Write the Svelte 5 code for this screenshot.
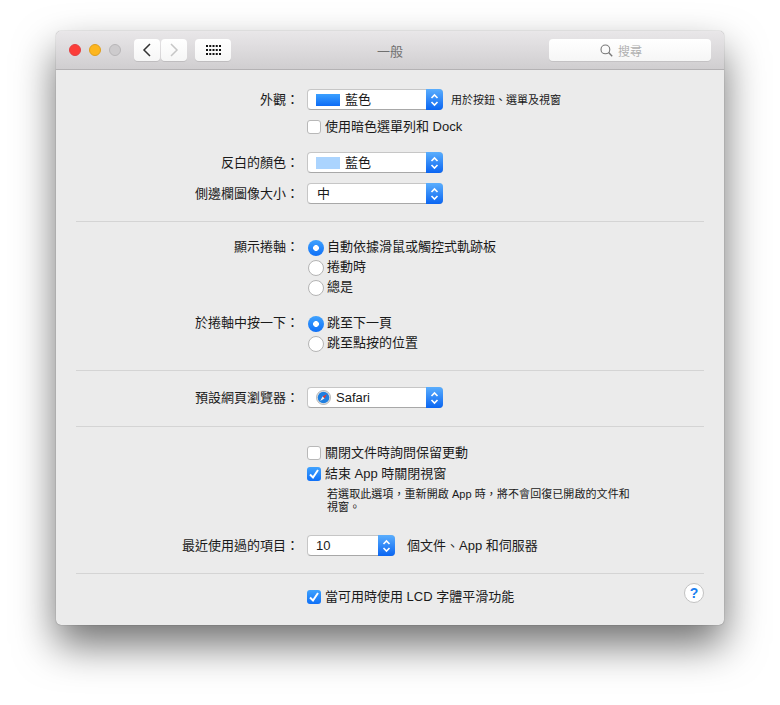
<script>
  // General preferences pane (OS X Yosemite, zh-Hant)
  const gridDots = []
  for (let r = 0; r < 3; r++) {
    for (let c = 0; c < 5; c++) gridDots.push({ x: c * 3.25, y: r * 4 })
  }
</script>

{#snippet arrows()}
  <span class="cap">
    <svg width="9" height="14" viewBox="0 0 9 14" fill="none" stroke="#fff" stroke-width="1.6">
      <path d="M1.5 5 L4.5 2 L7.5 5" />
      <path d="M1.5 9 L4.5 12 L7.5 9" />
    </svg>
  </span>
{/snippet}

{#snippet check(on)}
  <span class="box" class:on>
    {#if on}
      <svg width="14" height="14" viewBox="0 0 14 14" fill="none" stroke="#fff" stroke-width="2">
        <path d="M3 7.5 L6 10.5 L11 3" />
      </svg>
    {/if}
  </span>
{/snippet}

{#snippet radio(on, text)}
  <div class="row">
    <span></span>
    <div class="opt radio-opt">
      <span class="radio" class:on></span>
      <span class="txt">{text}</span>
    </div>
  </div>
{/snippet}

<div class="page">
  <div class="window">
    <header class="titlebar">
      <div class="lights">
        <span class="light red"></span>
        <span class="light yellow"></span>
        <span class="light off"></span>
      </div>
      <div class="nav">
        <button class="tbtn nav-btn">
          <svg width="10" height="14" viewBox="0 0 10 14" fill="none" stroke="#333" stroke-width="1.5">
            <path d="M8 1 L2 7 L8 13" />
          </svg>
        </button>
        <button class="tbtn nav-btn">
          <svg width="10" height="14" viewBox="0 0 10 14" fill="none" stroke="#c6c6c6" stroke-width="1.5">
            <path d="M2 1 L8 7 L2 13" />
          </svg>
        </button>
      </div>
      <button class="tbtn grid-btn">
        <svg width="15" height="10" viewBox="0 0 15 10" fill="#111">
          {#each gridDots as d}
            <rect x={d.x} y={d.y} width="2" height="2" />
          {/each}
        </svg>
      </button>
      <div class="title">一般</div>
      <div class="search">
        <svg width="13" height="13" viewBox="0 0 13 13" fill="none" stroke="#777" stroke-width="1.1">
          <circle cx="5.4" cy="5.4" r="4.4" />
          <path d="M8.6 8.6 L12.2 12.2" stroke-width="1.4" />
        </svg>
        <span>搜尋</span>
      </div>
    </header>

    <main class="content">
      <section class="s1">
        <div class="row">
          <span class="label">外觀：</span>
          <div class="opt">
            <div class="select">
              <span class="swatch blue"></span>
              <span class="txt">藍色</span>
              {@render arrows()}
            </div>
            <span class="hint txt">用於按鈕、選單及視窗</span>
          </div>
        </div>
        <div class="row check-dark">
          <span></span>
          <div class="opt chk">{@render check(false)}<span class="txt">使用暗色選單列和 Dock</span></div>
        </div>
        <div class="row after-chk">
          <span class="label">反白的顏色：</span>
          <div class="select">
            <span class="swatch light-blue"></span>
            <span class="txt">藍色</span>
            {@render arrows()}
          </div>
        </div>
        <div class="row next-select">
          <span class="label">側邊欄圖像大小：</span>
          <div class="select">
            <span class="txt plain">中</span>
            {@render arrows()}
          </div>
        </div>
      </section>

      <hr />

      <section class="s2">
        <div class="row">
          <span class="label">顯示捲軸：</span>
          <div class="opt radio-opt">
            <span class="radio on"></span>
            <span class="txt">自動依據滑鼠或觸控式軌跡板</span>
          </div>
        </div>
        {@render radio(false, '捲動時')}
        {@render radio(false, '總是')}
        <div class="row group">
          <span class="label">於捲軸中按一下：</span>
          <div class="opt radio-opt">
            <span class="radio on"></span>
            <span class="txt">跳至下一頁</span>
          </div>
        </div>
        {@render radio(false, '跳至點按的位置')}
      </section>

      <hr />

      <section class="s3">
        <div class="row">
          <span class="label">預設網頁瀏覽器：</span>
          <div class="select">
            <svg class="safari" width="15" height="15" viewBox="0 0 16 16">
              <circle cx="8" cy="8" r="7.5" fill="#e4e4e4" stroke="#8a8a8a" stroke-width="0.6" />
              <circle cx="8" cy="8" r="6.2" fill="#1f7fe0" />
              <path d="M11.6 4.4 L7 7 L9 9 Z" fill="#e8382c" />
              <path d="M4.4 11.6 L7 7 L9 9 Z" fill="#f2f2f2" />
            </svg>
            <span>Safari</span>
            {@render arrows()}
          </div>
        </div>
      </section>

      <hr />

      <section class="s4">
        <div class="row">
          <span></span>
          <div class="opt chk">{@render check(false)}<span class="txt">關閉文件時詢問保留更動</span></div>
        </div>
        <div class="row quit">
          <span></span>
          <div class="opt chk">{@render check(true)}<span class="txt">結束 App 時關閉視窗</span></div>
        </div>
        <div class="row note-row">
          <span></span>
          <p class="note">若選取此選項，重新開啟 App 時，將不會回復已開啟的文件和<br />視窗。</p>
        </div>
        <div class="row recent">
          <span class="label">最近使用過的項目：</span>
          <div class="opt">
            <div class="select small">
              <span>10</span>
              {@render arrows()}
            </div>
            <span class="items txt">個文件、App 和伺服器</span>
          </div>
        </div>
      </section>

      <hr />

      <section class="s5">
        <div class="row">
          <span></span>
          <div class="opt chk">{@render check(true)}<span class="txt">當可用時使用 LCD 字體平滑功能</span></div>
          <button class="help">?</button>
        </div>
      </section>
    </main>
  </div>
</div>

<style>
  :global(body) {
    background: #fff;
    font-family: "Liberation Sans", "Noto Sans CJK TC", sans-serif;
    font-size: 13px;
    color: #1a1a1a;
  }

  .page {
    padding: 31px 56px 80px;
    height: 705px;
    box-sizing: border-box;
    overflow: hidden;
  }

  .window {
    width: 668px;
    height: 594px;
    border-radius: 5px;
    background: #ebebeb;
    box-shadow:
      0 0 1px rgba(0, 0, 0, 0.55),
      0 20px 40px rgba(0, 0, 0, 0.56);
    overflow: hidden;
    display: flex;
    flex-direction: column;
  }

  .titlebar {
    height: 38px;
    flex: none;
    display: flex;
    align-items: center;
    position: relative;
    padding-left: 13px;
    background: linear-gradient(#e9e7e9, #d0ced0);
    border-bottom: 1px solid #b4b2b4;
    border-top: 1px solid #f0eef0;
    margin-top: -1px;
  }

  .lights {
    display: flex;
    gap: 8px;
  }

  .light {
    width: 12px;
    height: 12px;
    border-radius: 50%;
    box-sizing: border-box;
  }

  .red { background: #fc3d39; border: 1px solid #e33e41; }
  .yellow { background: #fdb61e; border: 1px solid #e09e1a; }
  .off { background: #cdcbcd; border: 1px solid #b8b6b8; }

  .nav {
    display: flex;
    gap: 1px;
    margin-left: 13px;
  }

  .tbtn {
    height: 22px;
    padding: 0;
    border: 0;
    border-radius: 4px;
    background: linear-gradient(#fff, #f6f6f6);
    box-shadow: 0 1px 0 rgba(0, 0, 0, 0.1);
    display: flex;
    align-items: center;
    justify-content: center;
  }

  .nav-btn { width: 26px; }
  .grid-btn { width: 36px; margin-left: 8px; }

  .title {
    position: absolute;
    left: 0;
    right: 0;
    text-align: center;
    color: #707070;
    pointer-events: none;
  }

  .search {
    margin-left: auto;
    margin-right: 13px;
    width: 162px;
    height: 22px;
    box-sizing: border-box;
    padding-right: 18px;
    border-radius: 4px;
    background: linear-gradient(#fff, #f6f6f6);
    box-shadow: 0 1px 0 rgba(0, 0, 0, 0.08);
    display: flex;
    align-items: center;
    justify-content: center;
    gap: 5px;
    color: #b0b0b0;
    font-size: 12px;
  }

  .content {
    flex: 1;
    padding: 0 20px;
  }

  hr {
    border: 0;
    height: 1px;
    margin: 0;
    background: #d4d4d4;
  }

  .row {
    display: grid;
    grid-template-columns: 223px auto 1fr;
    column-gap: 8px;
    align-items: center;
    min-height: 20px;
  }

  .label, .txt {
    line-height: 20px;
  }

  .label {
    text-align: right;
    white-space: nowrap;
  }

  .opt {
    display: flex;
    align-items: center;
    white-space: nowrap;
  }

  .chk { gap: 4px; }
  .radio-opt { gap: 3px; }

  .s1 { padding: 19px 0 17px; }
  .s2 { padding: 15px 0 17px; }
  .s3 { padding: 16px 0 18px; }
  .s4 { padding: 16px 0 17px; }
  .s5 { padding: 13px 0 18px; }

  .check-dark { margin-top: 7px; }
  .after-chk { margin-top: 15px; }
  .next-select { margin-top: 10px; }
  .group { margin-top: 16px; }
  .quit { margin-top: 1px; }
  .note-row { margin-top: 4px; }
  .recent { margin-top: 21px; }

  .select {
    position: relative;
    width: 136px;
    height: 21px;
    box-sizing: border-box;
    display: flex;
    align-items: center;
    padding-left: 8px;
    background: #fff;
    border-radius: 4px;
    border: 1px solid #c6c6c6;
    border-bottom-color: #a8a8a8;
  }

  .select.small { width: 88px; }

  .swatch {
    width: 24px;
    height: 12px;
    margin-right: 5px;
  }

  .blue { background: linear-gradient(#3ba0ff, #0d6cf6); }
  .light-blue { background: #abd4fe; }

  .plain { margin-left: 1px; }

  .safari {
    margin-right: 5px;
    flex: none;
  }

  .cap {
    position: absolute;
    right: -1px;
    top: -1px;
    bottom: -1px;
    width: 17px;
    border-radius: 0 4px 4px 0;
    background: linear-gradient(#5aaefd, #0a65f2);
    display: flex;
    align-items: center;
    justify-content: center;
  }

  .hint {
    margin-left: 8px;
    font-size: 11px;
  }

  .items { margin-left: 12px; }

  .box {
    width: 14px;
    height: 14px;
    box-sizing: border-box;
    flex: none;
    border-radius: 3px;
    background: #fff;
    border: 1px solid #b8b8b8;
    display: flex;
    align-items: center;
    justify-content: center;
  }

  .box.on {
    background: linear-gradient(#3fa2fe, #0f70f7);
    border: 0;
  }

  .radio {
    width: 16px;
    height: 16px;
    margin: 2px 0 0 1px;
    box-sizing: border-box;
    flex: none;
    border-radius: 50%;
    background: #fff;
    border: 1px solid #b4b4b4;
  }

  .radio.on {
    border: 0;
    background: radial-gradient(circle, #fff 0 2.6px, transparent 3.2px), linear-gradient(#3fa2fe, #0f70f7);
  }

  .note {
    margin: 0 0 0 20px;
    font-size: 11px;
    line-height: 13px;
    letter-spacing: 0.07px;
    white-space: nowrap;
  }

  .help {
    justify-self: end;
    width: 20px;
    height: 20px;
    margin: -8px 0 0;
    padding: 0;
    border-radius: 50%;
    border: 1px solid #c2c2c2;
    background: #fff;
    color: #1a7ff0;
    font: bold 14px/18px "Liberation Sans", sans-serif;
  }
</style>
